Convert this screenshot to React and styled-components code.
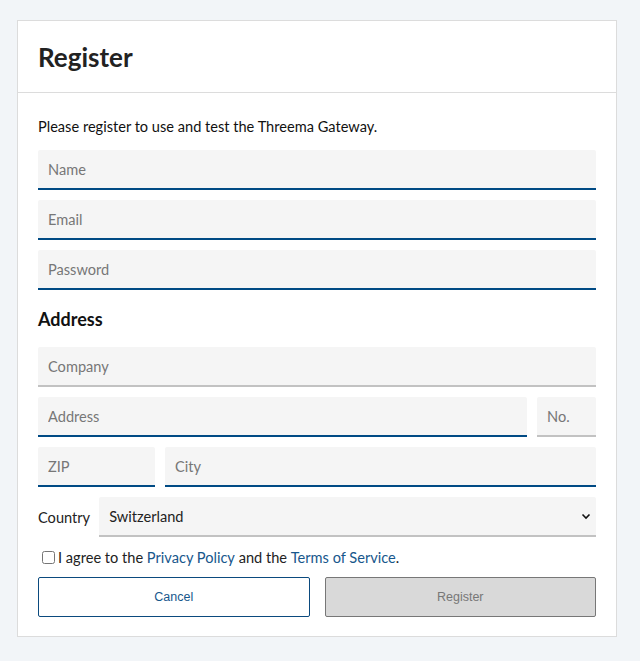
import React from "react";
import styled, { createGlobalStyle } from "styled-components";

const Global = createGlobalStyle`
  html, body { margin: 0; padding: 0; background: #f2f5f8; }
  body { font-family: "Lato", "Liberation Sans", sans-serif; color: #222; }
  * { box-sizing: border-box; }
`;

const Page = styled.div`
  padding: 20px 23px 25px 17px;
`;

const Card = styled.div`
  width: 600px;
  background: #fff;
  border: 1px solid #dcdcdc;
`;

const Header = styled.div`
  height: 72px;
  display: flex;
  align-items: center;
  padding: 0 20px;
  border-bottom: 1px solid #dcdcdc;
`;

const Title = styled.h1`
  margin: 0;
  font-size: 26px;
  font-weight: 700;
  color: #222;
  padding-top: 1px;
`;

const Body = styled.div`
  padding: 24px 20px 19px;
  display: flex;
  flex-direction: column;
`;

const Intro = styled.p`
  margin: 0 0 13px;
  font-size: 14.6px;
  line-height: 20px;
  color: #111;
`;

const Stack = styled.div`
  display: flex;
  flex-direction: column;
  gap: 10px;
`;

const Row = styled.div`
  display: grid;
  grid-template-columns: ${(p) => p.$cols};
  gap: ${(p) => p.$gap || "10px"};
  align-items: center;
`;

const Input = styled.input`
  display: block;
  width: 100%;
  height: 40px;
  border: none;
  border-bottom: 2px solid ${(p) => (p.$required ? "#004a84" : "#c2c2c2")};
  border-radius: 2px 2px 0 0;
  background: #f5f5f5;
  padding: 0 10px;
  font-family: inherit;
  font-size: 14.6px;
  color: #222;
  outline: none;
  &::placeholder { color: #777; }
`;

const Section = styled.h2`
  margin: 17px 0 16px;
  font-size: 18px;
  line-height: 24px;
  font-weight: 700;
  color: #111;
`;

const Label = styled.label`
  font-size: 14.6px;
  color: #222;
`;

const SelectWrap = styled.div`
  position: relative;
  height: 40px;
`;

const Select = styled.select`
  appearance: none;
  width: 100%;
  height: 40px;
  border: none;
  border-bottom: 2px solid #c2c2c2;
  border-radius: 2px 2px 0 0;
  background: #f5f5f5;
  padding: 0 10px;
  font-family: inherit;
  font-size: 14.6px;
  color: #222;
  outline: none;
`;

const Chevron = styled.svg`
  position: absolute;
  right: 5px;
  top: 15px;
  pointer-events: none;
`;

const Agree = styled.label`
  display: flex;
  align-items: center;
  margin: 10px 0 10px;
  height: 20px;
  font-size: 14.6px;
  color: #222;
  & input { margin: 0 3px 0 4px; width: 13px; height: 13px; }
`;

const Link = styled.a`
  color: #17578c;
  text-decoration: none;
`;

const Buttons = styled.div`
  display: grid;
  grid-template-columns: 1fr 1fr;
  gap: 15px;
`;

const Button = styled.button`
  height: 40px;
  border-radius: 2px;
  font-family: "Liberation Sans", sans-serif;
  font-size: 12.5px;
  border: 1px solid ${(p) => (p.$primary ? "#777" : "#0b4a7e")};
  background: ${(p) => (p.$primary ? "#d9d9d9" : "#fff")};
  color: ${(p) => (p.$primary ? "#777" : "#17578c")};
`;

export default function App() {
  return (
    <>
      <Global />
      <Page>
        <Card>
          <Header>
            <Title>Register</Title>
          </Header>
          <Body>
            <Intro>Please register to use and test the Threema Gateway.</Intro>
            <Stack>
              <Input $required placeholder="Name" />
              <Input $required placeholder="Email" />
              <Input $required type="password" placeholder="Password" />
            </Stack>
            <Section>Address</Section>
            <Stack>
              <Input placeholder="Company" />
              <Row $cols="1fr 59px">
                <Input $required placeholder="Address" />
                <Input placeholder="No." />
              </Row>
              <Row $cols="117px 1fr">
                <Input $required placeholder="ZIP" />
                <Input $required placeholder="City" />
              </Row>
              <Row $cols="auto 1fr" $gap="9px">
                <Label>Country</Label>
                <SelectWrap>
                  <Select defaultValue="CH">
                    <option value="CH">Switzerland</option>
                  </Select>
                  <Chevron width="10" height="8" viewBox="0 0 10 8">
                    <path d="M1.5 2.5 L5 6 L8.5 2.5" fill="none" stroke="#111" strokeWidth="1.6" />
                  </Chevron>
                </SelectWrap>
              </Row>
            </Stack>
            <Agree>
              <input type="checkbox" />
              I agree to the&nbsp;<Link href="#">Privacy Policy</Link>&nbsp;and the&nbsp;
              <Link href="#">Terms of Service</Link>.
            </Agree>
            <Buttons>
              <Button>Cancel</Button>
              <Button $primary disabled>Register</Button>
            </Buttons>
          </Body>
        </Card>
      </Page>
    </>
  );
}
